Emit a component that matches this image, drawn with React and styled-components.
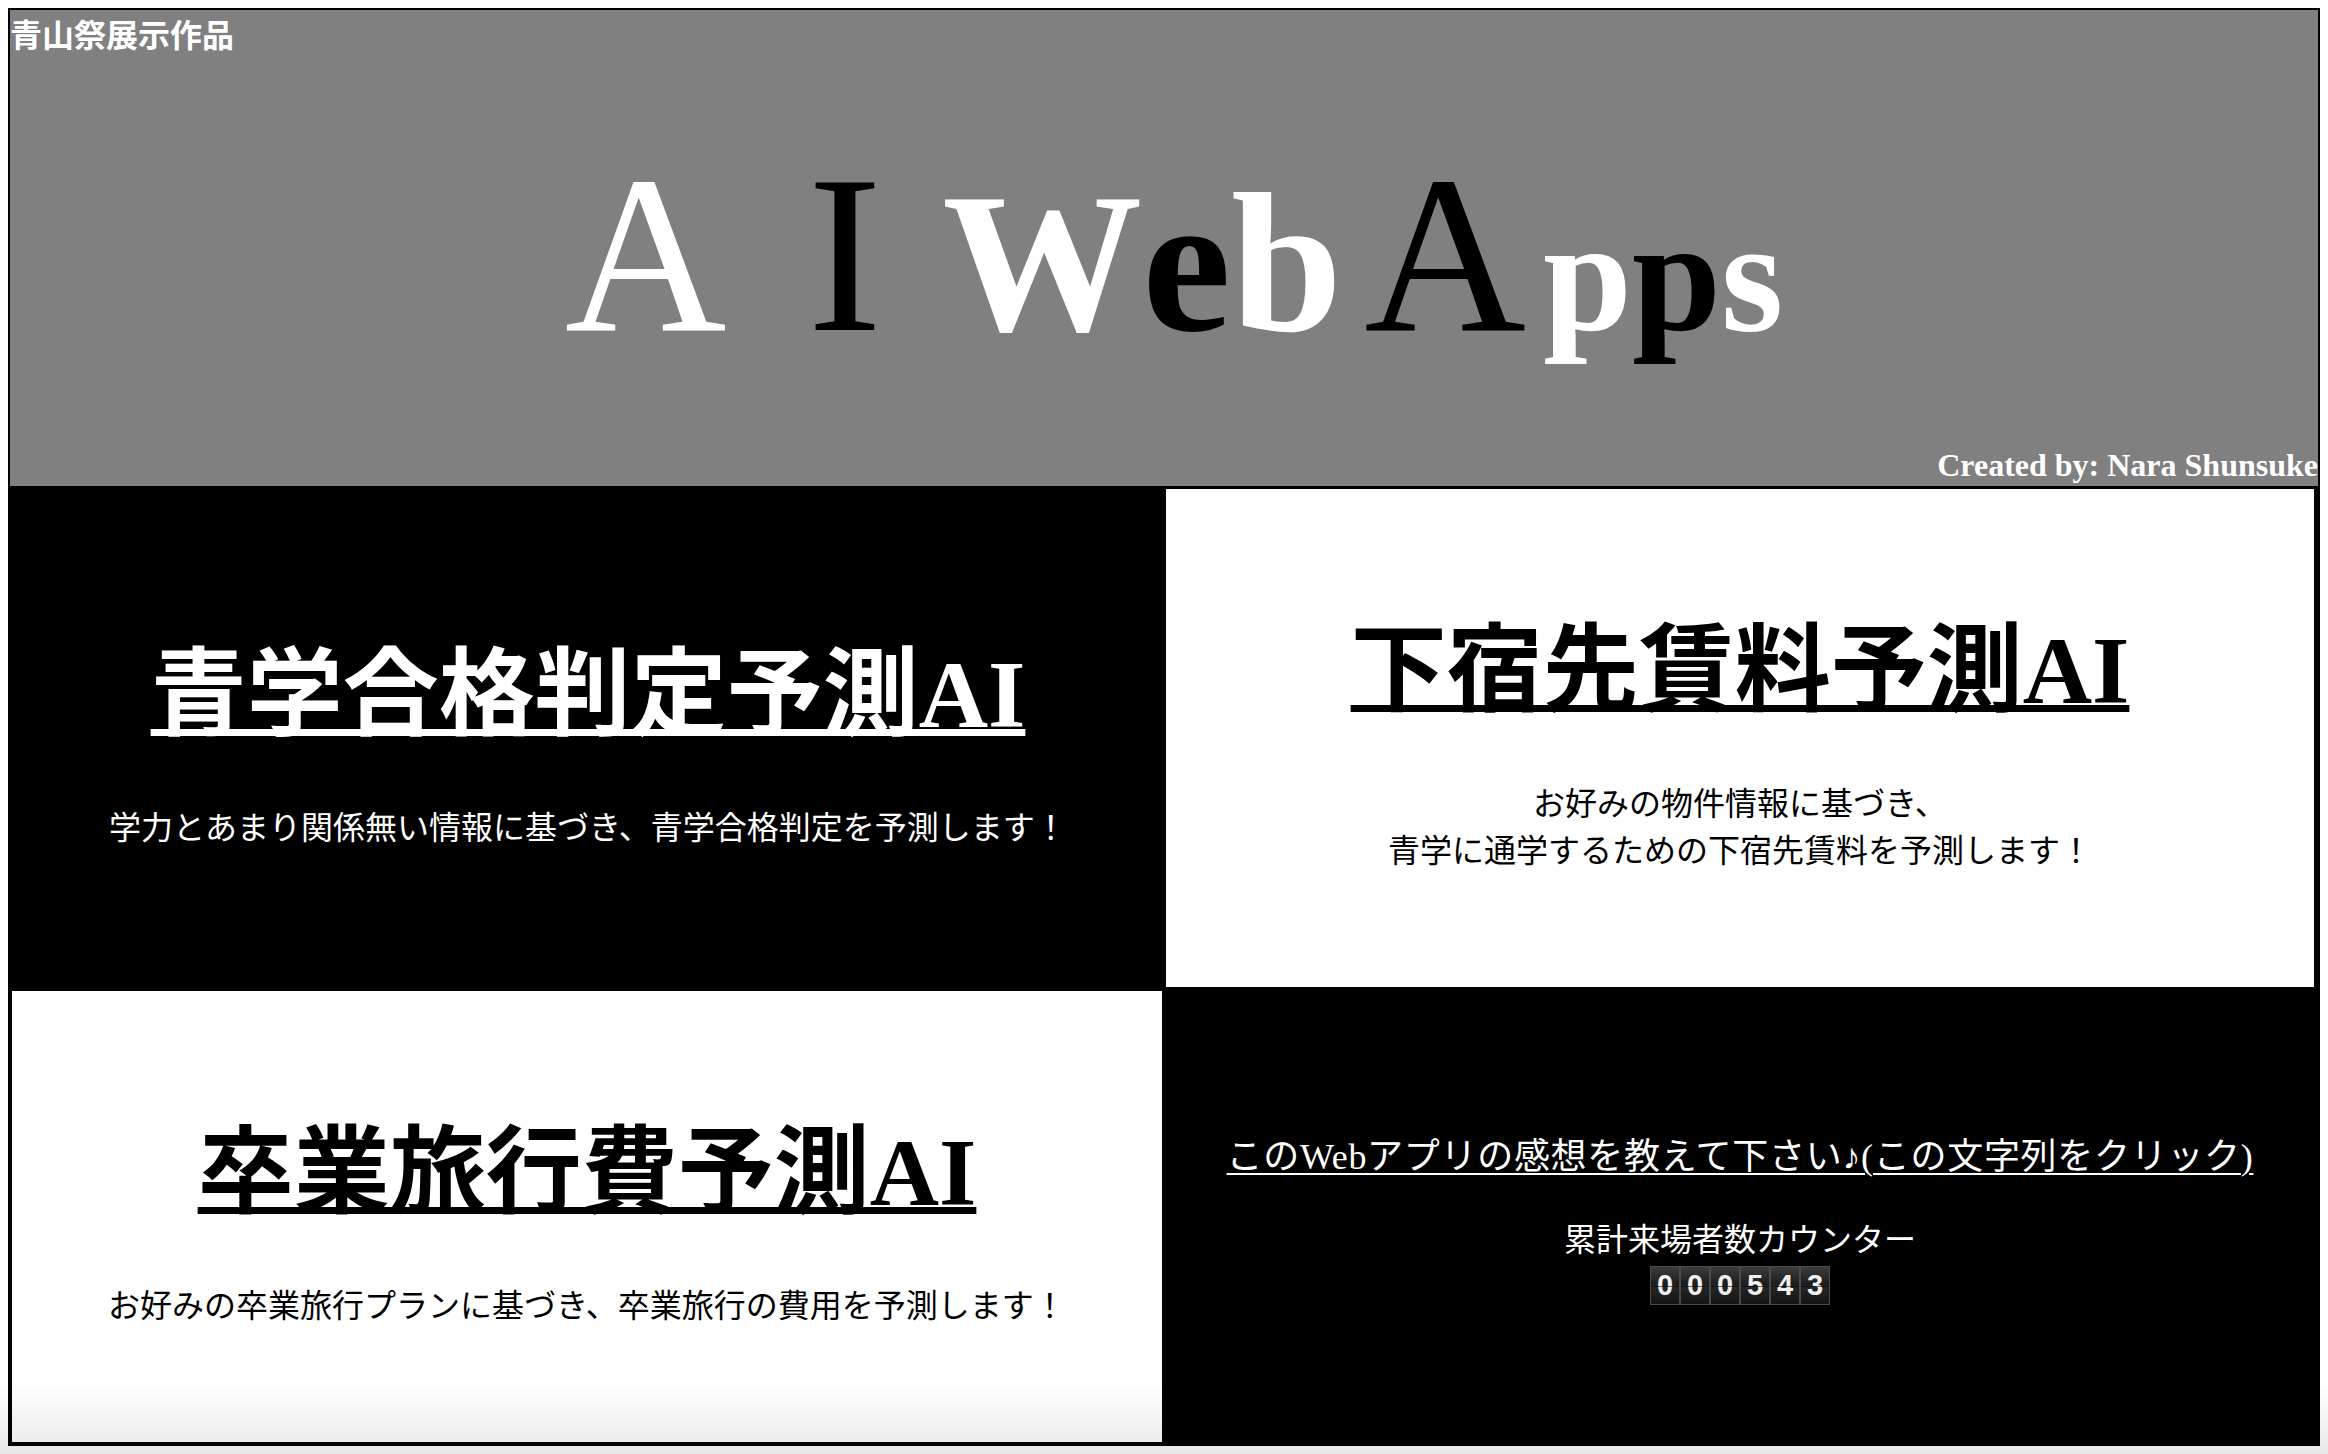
import styled, { createGlobalStyle } from "styled-components";

const GlobalStyle = createGlobalStyle`
  html {
    background: #fff;
  }
  body {
    margin: 8px;
    font-family: "Liberation Serif", "Noto Sans CJK JP", serif;
  }
`;

const Frame = styled.div`
  display: flex;
  flex-direction: column;
  height: 1434px;
  border: 2px solid #000;
  background: #000;
`;

const Header = styled.header`
  display: flex;
  flex-direction: column;
  flex: 0 0 476px;
  background: #808080;
  color: #fff;
`;

const Tag = styled.div`
  font-size: 32px;
  font-weight: 700;
`;

const Title = styled.h1`
  display: flex;
  justify-content: center;
  align-items: baseline;
  margin: 86px 0 0;
  padding-left: 20px;
  font-family: "Liberation Serif", serif;
  line-height: 1;
`;

const Glyph = styled.span`
  font-size: ${(p) => p.$size}px;
  font-weight: ${(p) => (p.$bold ? 700 : 400)};
  color: ${(p) => (p.$tone === "dark" ? "#000" : "#fff")};
  margin-right: ${(p) => p.$gap || 0}px;
`;

const Credit = styled.div`
  margin: auto 0 5px;
  text-align: right;
  font-size: 32px;
  font-weight: 700;
  line-height: 32px;
`;

const Row = styled.div`
  display: flex;
  flex: ${(p) => (p.$h ? `0 0 ${p.$h}px` : "1")};
`;

const Cell = styled.section`
  box-sizing: border-box;
  display: flex;
  flex-direction: column;
  align-items: center;
  justify-content: center;
  padding-top: ${(p) => p.$pad ?? 12}px;
  flex: ${(p) => (p.$w ? `0 0 ${p.$w}px` : "1")};
  margin: ${(p) => p.$inset || 0};
  background: ${(p) => (p.$tone === "dark" ? "#000" : "#fff")};
  color: ${(p) => (p.$tone === "dark" ? "#fff" : "#000")};
`;

const AppTitle = styled.a`
  font-size: 96px;
  font-weight: 700;
  line-height: 115px;
  color: inherit;
  text-decoration: underline;
  text-decoration-thickness: 7px;
  text-underline-offset: 2px;
`;

const Blurb = styled.p`
  margin: 53px 0 0;
  font-size: 32px;
  line-height: 47px;
  text-align: center;
`;

const FeedbackLink = styled.a`
  font-size: 36px;
  line-height: 50px;
  letter-spacing: 0.7px;
  color: #fff;
  text-decoration: underline;
  text-decoration-thickness: 2px;
  text-underline-offset: 4px;
`;

const CounterLabel = styled.div`
  margin-top: 35px;
  font-size: 32px;
  line-height: 47px;
`;

const Counter = styled.div`
  display: flex;
  margin-top: 2px;
`;

const Digit = styled.span`
  position: relative;
  box-sizing: border-box;
  display: flex;
  align-items: center;
  justify-content: center;
  width: 30px;
  height: 39px;
  border: 1px solid #4a4a4a;
  background: linear-gradient(#3c3c3c, #1c1c1c 48%, #262626 52%, #141414);
  color: #f0f0f0;
  font: 700 29px/1 "Liberation Sans", sans-serif;

  &::after {
    content: "";
    position: absolute;
    left: 0;
    right: 0;
    top: 50%;
    height: 1px;
    background: rgba(0, 0, 0, 0.55);
  }
`;

const Shade = styled.div`
  position: fixed;
  left: 0;
  right: 0;
  bottom: 0;
  height: 68px;
  pointer-events: none;
  background: linear-gradient(rgba(0, 0, 0, 0), rgba(0, 0, 0, 0.09));
`;

const titleGlyphs = [
  { ch: "A", size: 224, tone: "light", gap: 81 },
  { ch: "I", size: 224, tone: "dark", gap: 60 },
  { ch: "W", size: 200, tone: "light", bold: true },
  { ch: "e", size: 200, tone: "dark", bold: true },
  { ch: "b", size: 200, tone: "light", bold: true, gap: 22 },
  { ch: "A", size: 224, tone: "dark", gap: 17 },
  { ch: "p", size: 160, tone: "light", bold: true },
  { ch: "p", size: 160, tone: "dark", bold: true },
  { ch: "s", size: 160, tone: "light", bold: true },
];

const visitors = "000543";

export default function App() {
  return (
    <>
      <GlobalStyle />
      <Frame>
        <Header>
          <Tag>青山祭展示作品</Tag>
          <Title>
            {titleGlyphs.map((g, i) => (
              <Glyph
                key={i}
                $size={g.size}
                $tone={g.tone}
                $bold={g.bold}
                $gap={g.gap}
              >
                {g.ch}
              </Glyph>
            ))}
          </Title>
          <Credit>Created by: Nara Shunsuke</Credit>
        </Header>

        <Row $h={505}>
          <Cell $tone="dark" $w={1156}>
            <AppTitle href="#">青学合格判定予測AI</AppTitle>
            <Blurb>学力とあまり関係無い情報に基づき、青学合格判定を予測します！</Blurb>
          </Cell>
          <Cell $tone="light" $inset="3px 4px 4px 0">
            <AppTitle href="#">下宿先賃料予測AI</AppTitle>
            <Blurb>
              お好みの物件情報に基づき、
              <br />
              青学に通学するための下宿先賃料を予測します！
            </Blurb>
          </Cell>
        </Row>

        <Row>
          <Cell $tone="light" $w={1150} $inset="0 0 2px 2px">
            <AppTitle href="#">卒業旅行費予測AI</AppTitle>
            <Blurb>お好みの卒業旅行プランに基づき、卒業旅行の費用を予測します！</Blurb>
          </Cell>
          <Cell $tone="dark" $pad={2}>
            <FeedbackLink href="#">
              このWebアプリの感想を教えて下さい♪(この文字列をクリック)
            </FeedbackLink>
            <CounterLabel>累計来場者数カウンター</CounterLabel>
            <Counter>
              {visitors.split("").map((d, i) => (
                <Digit key={i}>{d}</Digit>
              ))}
            </Counter>
          </Cell>
        </Row>
      </Frame>
      <Shade />
    </>
  );
}
